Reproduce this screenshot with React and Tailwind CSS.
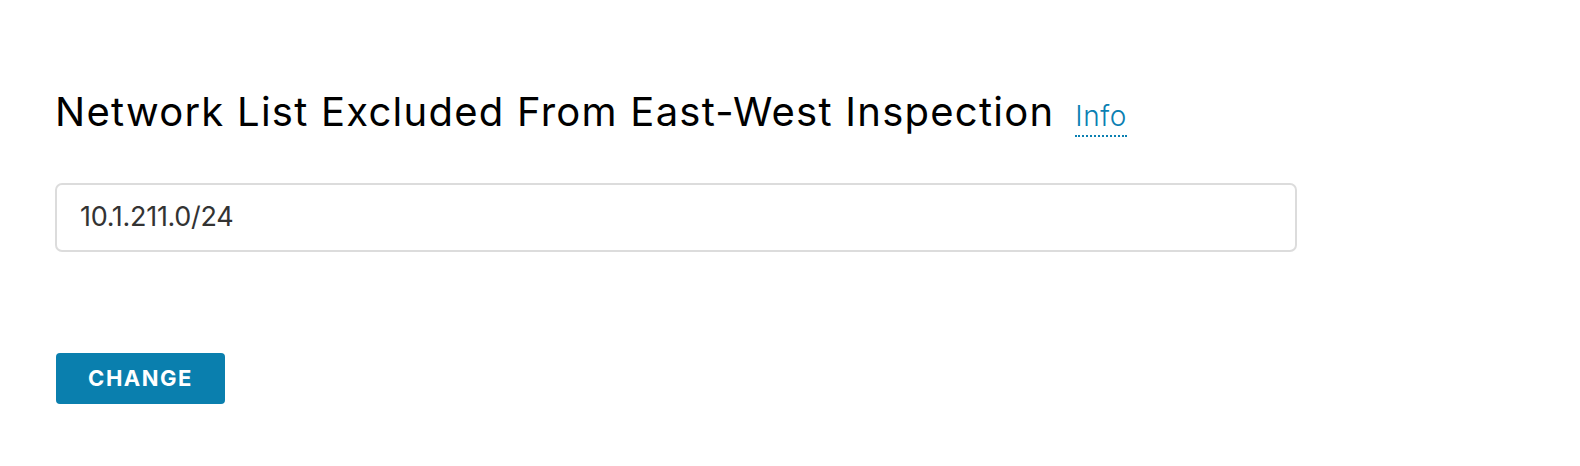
import React from 'react';

export default function App() {
    return (
        <div className="min-h-[466px] bg-white pl-[55px] pt-[88px]" style={{ fontFamily: 'Inter, "Liberation Sans", sans-serif' }}>
            {/* Heading with info link */}
            <div className="flex items-baseline gap-[21px]">
                <h2 className="text-[40px] leading-[48px] font-normal tracking-[1.25px] text-black">Network List Excluded From East-West Inspection</h2>
                <a className="text-[28px] leading-[34px] pb-[2px] font-light tracking-[0.5px] text-[#0b80b2] border-b-2 border-dotted border-[#0b80b2]">Info</a>
            </div>

            {/* Network list field */}
            <div className="mt-[46px] w-[1242px] h-[69px] flex items-center rounded-[7px] border-2 border-[#dcdcdc] px-[23px]">
                <span className="text-[27px] tracking-[-0.3px] text-[#333333]">10.1.211.0/24</span>
            </div>

            <button className="mt-[101px] ml-[1px] w-[169px] h-[51px] rounded-[4px] bg-[#0a7fae] text-white text-[22px] font-bold tracking-[1.5px]">
                CHANGE
            </button>
        </div>
    );
}
